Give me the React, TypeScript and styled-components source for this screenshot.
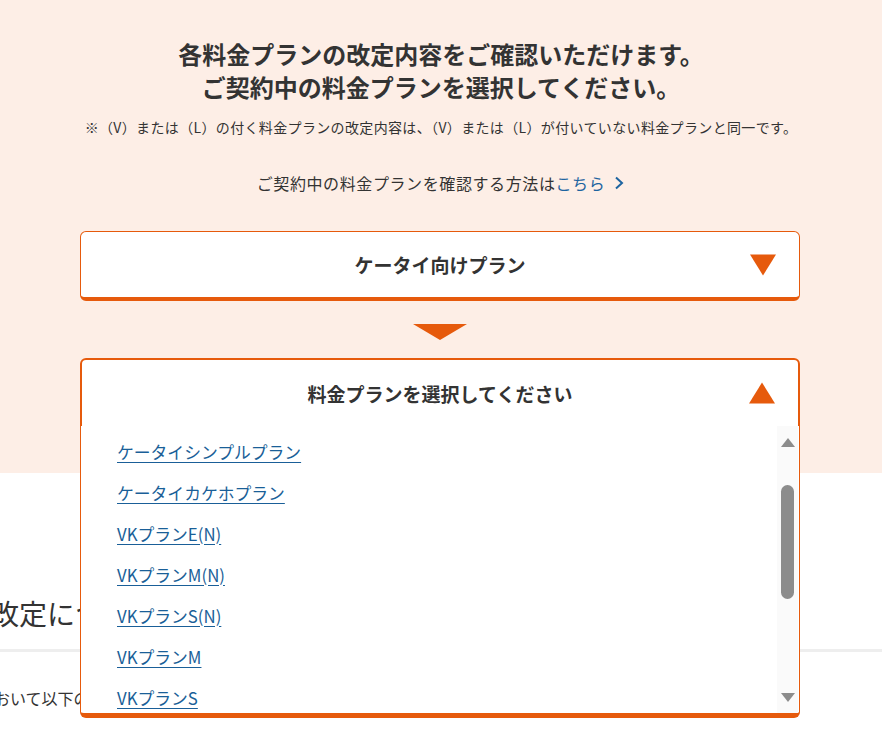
import styled, { createGlobalStyle } from 'styled-components'

const GlobalStyle = createGlobalStyle`
  html, body {
    margin: 0;
    padding: 0;
    background: #ffffff;
    overflow: hidden;
  }
  body {
    font-family: "Noto Sans CJK JP", "Noto Sans", sans-serif;
    color: #333333;
  }
`

const ORANGE = '#e65a0c'
const LINK = '#1d64a0'

const Page = styled.div`
  width: 882px;
  height: 734px;
  overflow: hidden;
`

const Hero = styled.section`
  background: #fdeee6;
  padding: 37px 0 45px;
`

const Title = styled.h1`
  margin: 0;
  font-size: 24px;
  line-height: 33px;
  font-weight: 700;
  text-align: center;
  color: #333333;
`

const Note = styled.p`
  margin: 14px 0 0;
  font-size: 14px;
  letter-spacing: 0.35px;
  line-height: 20px;
  text-align: center;
  color: #333333;
`

const HowTo = styled.p`
  margin: 34px 0 0;
  font-size: 16px;
  letter-spacing: 0.6px;
  line-height: 24px;
  text-align: center;
  color: #333333;
`

const HowToLink = styled.a`
  color: ${LINK};
  text-decoration: none;
  display: inline-flex;
  align-items: center;
  gap: 8px;
`

const Selector = styled.div`
  width: 720px;
  margin: 36px 0 0 80px;
  display: flex;
  flex-direction: column;
  align-items: center;
`

const Card = styled.div<{ $open?: boolean }>`
  position: relative;
  width: 100%;
  box-sizing: border-box;
  background: #ffffff;
  display: flex;
  align-items: center;
  justify-content: center;
  height: 70px;
  ${(p) =>
    p.$open
      ? `
    border: 2px solid ${ORANGE};
    border-radius: 6px 6px 0 0;
  `
      : `
    border: 1px solid ${ORANGE};
    border-bottom-width: 4px;
    border-radius: 6px;
  `}
`

const CardLabel = styled.span`
  font-size: 19px;
  font-weight: 700;
  color: #333333;
`

const Caret = styled.span<{ $up?: boolean }>`
  position: absolute;
  right: 23px;
  top: 50%;
  transform: translateY(-50%);
  width: 0;
  height: 0;
  border-left: 13px solid transparent;
  border-right: 13px solid transparent;
  ${(p) =>
    p.$up
      ? `border-bottom: 21px solid ${ORANGE};`
      : `border-top: 21px solid ${ORANGE};`}
`

const StepArrow = styled.div`
  margin: 23px 0 18px;
  width: 0;
  height: 0;
  border-left: 27px solid transparent;
  border-right: 27px solid transparent;
  border-top: 16px solid ${ORANGE};
`

const Dropdown = styled.div`
  position: absolute;
  top: 100%;
  left: -2px;
  right: -2px;
  height: 292px;
  box-sizing: border-box;
  background: #ffffff;
  border: 1px solid ${ORANGE};
  border-top: none;
  border-bottom: 5px solid ${ORANGE};
  border-radius: 0 0 6px 6px;
  display: flex;
  z-index: 2;
`

const OptionList = styled.ul`
  flex: 1;
  margin: 0;
  padding: 5px 0 0 36px;
  list-style: none;
  overflow: hidden;
`

const Option = styled.li`
  height: 41px;
  display: flex;
  align-items: center;
`

const OptionLink = styled.a`
  font-size: 16.8px;
  color: #1a5f98;
  text-decoration: underline;
  text-underline-offset: 3px;
`

const ScrollTrack = styled.div`
  width: 21px;
  margin-right: 1px;
  background: #fafafa;
  display: flex;
  flex-direction: column;
  align-items: center;
  padding: 12px 0 11px;
  box-sizing: border-box;
`

const ScrollArrow = styled.span<{ $up?: boolean }>`
  width: 0;
  height: 0;
  border-left: 7px solid transparent;
  border-right: 7px solid transparent;
  ${(p) =>
    p.$up ? 'border-bottom: 9px solid #8c8c8c;' : 'border-top: 9px solid #8c8c8c;'}
`

const ScrollThumb = styled.div`
  width: 13px;
  height: 114px;
  margin-top: 38px;
  border-radius: 7px;
  background: #8c8c8c;
`

const ScrollSpacer = styled.div`
  flex: 1;
`

const Content = styled.section`
  padding-top: 120px;
`

const SectionHeading = styled.h2`
  margin: 0;
  font-size: 28px;
  line-height: 40px;
  font-weight: 400;
  text-indent: -9px;
  white-space: nowrap;
  color: #333333;
  padding-bottom: 16px;
  border-bottom: 3px solid #eeeeee;
`

const Body = styled.p`
  margin: 34px 0 0;
  font-size: 16px;
  line-height: 24px;
  text-indent: -22px;
  white-space: nowrap;
  color: #333333;
`

const Chevron = () => (
  <svg width="12" height="14" viewBox="0 0 12 14" fill="none">
    <path d="M3 1.5 L9 7 L3 12.5" stroke={LINK} strokeWidth="2" />
  </svg>
)

const plans = [
  'ケータイシンプルプラン',
  'ケータイカケホプラン',
  'VKプランE(N)',
  'VKプランM(N)',
  'VKプランS(N)',
  'VKプランM',
  'VKプランS',
  'VKプランL',
]

const App = () => {
  return (
    <Page>
      <GlobalStyle />
      <Hero>
        <Title>
          各料金プランの改定内容をご確認いただけます。
          <br />
          ご契約中の料金プランを選択してください。
        </Title>
        <Note>※（V）または（L）の付く料金プランの改定内容は、（V）または（L）が付いていない料金プランと同一です。</Note>
        <HowTo>
          ご契約中の料金プランを確認する方法は
          <HowToLink href="#">
            こちら
            <Chevron />
          </HowToLink>
        </HowTo>
        <Selector>
          <Card>
            <CardLabel>ケータイ向けプラン</CardLabel>
            <Caret />
          </Card>
          <StepArrow />
          <Card $open>
            <CardLabel>料金プランを選択してください</CardLabel>
            <Caret $up />
            <Dropdown>
              <OptionList>
                {plans.map((plan) => (
                  <Option key={plan}>
                    <OptionLink href="#">{plan}</OptionLink>
                  </Option>
                ))}
              </OptionList>
              <ScrollTrack>
                <ScrollArrow $up />
                <ScrollThumb />
                <ScrollSpacer />
                <ScrollArrow />
              </ScrollTrack>
            </Dropdown>
          </Card>
        </Selector>
      </Hero>
      <Content>
        <SectionHeading>改定について</SectionHeading>
        <Body>において以下の内容に改定いたします。</Body>
      </Content>
    </Page>
  )
}

export default App
